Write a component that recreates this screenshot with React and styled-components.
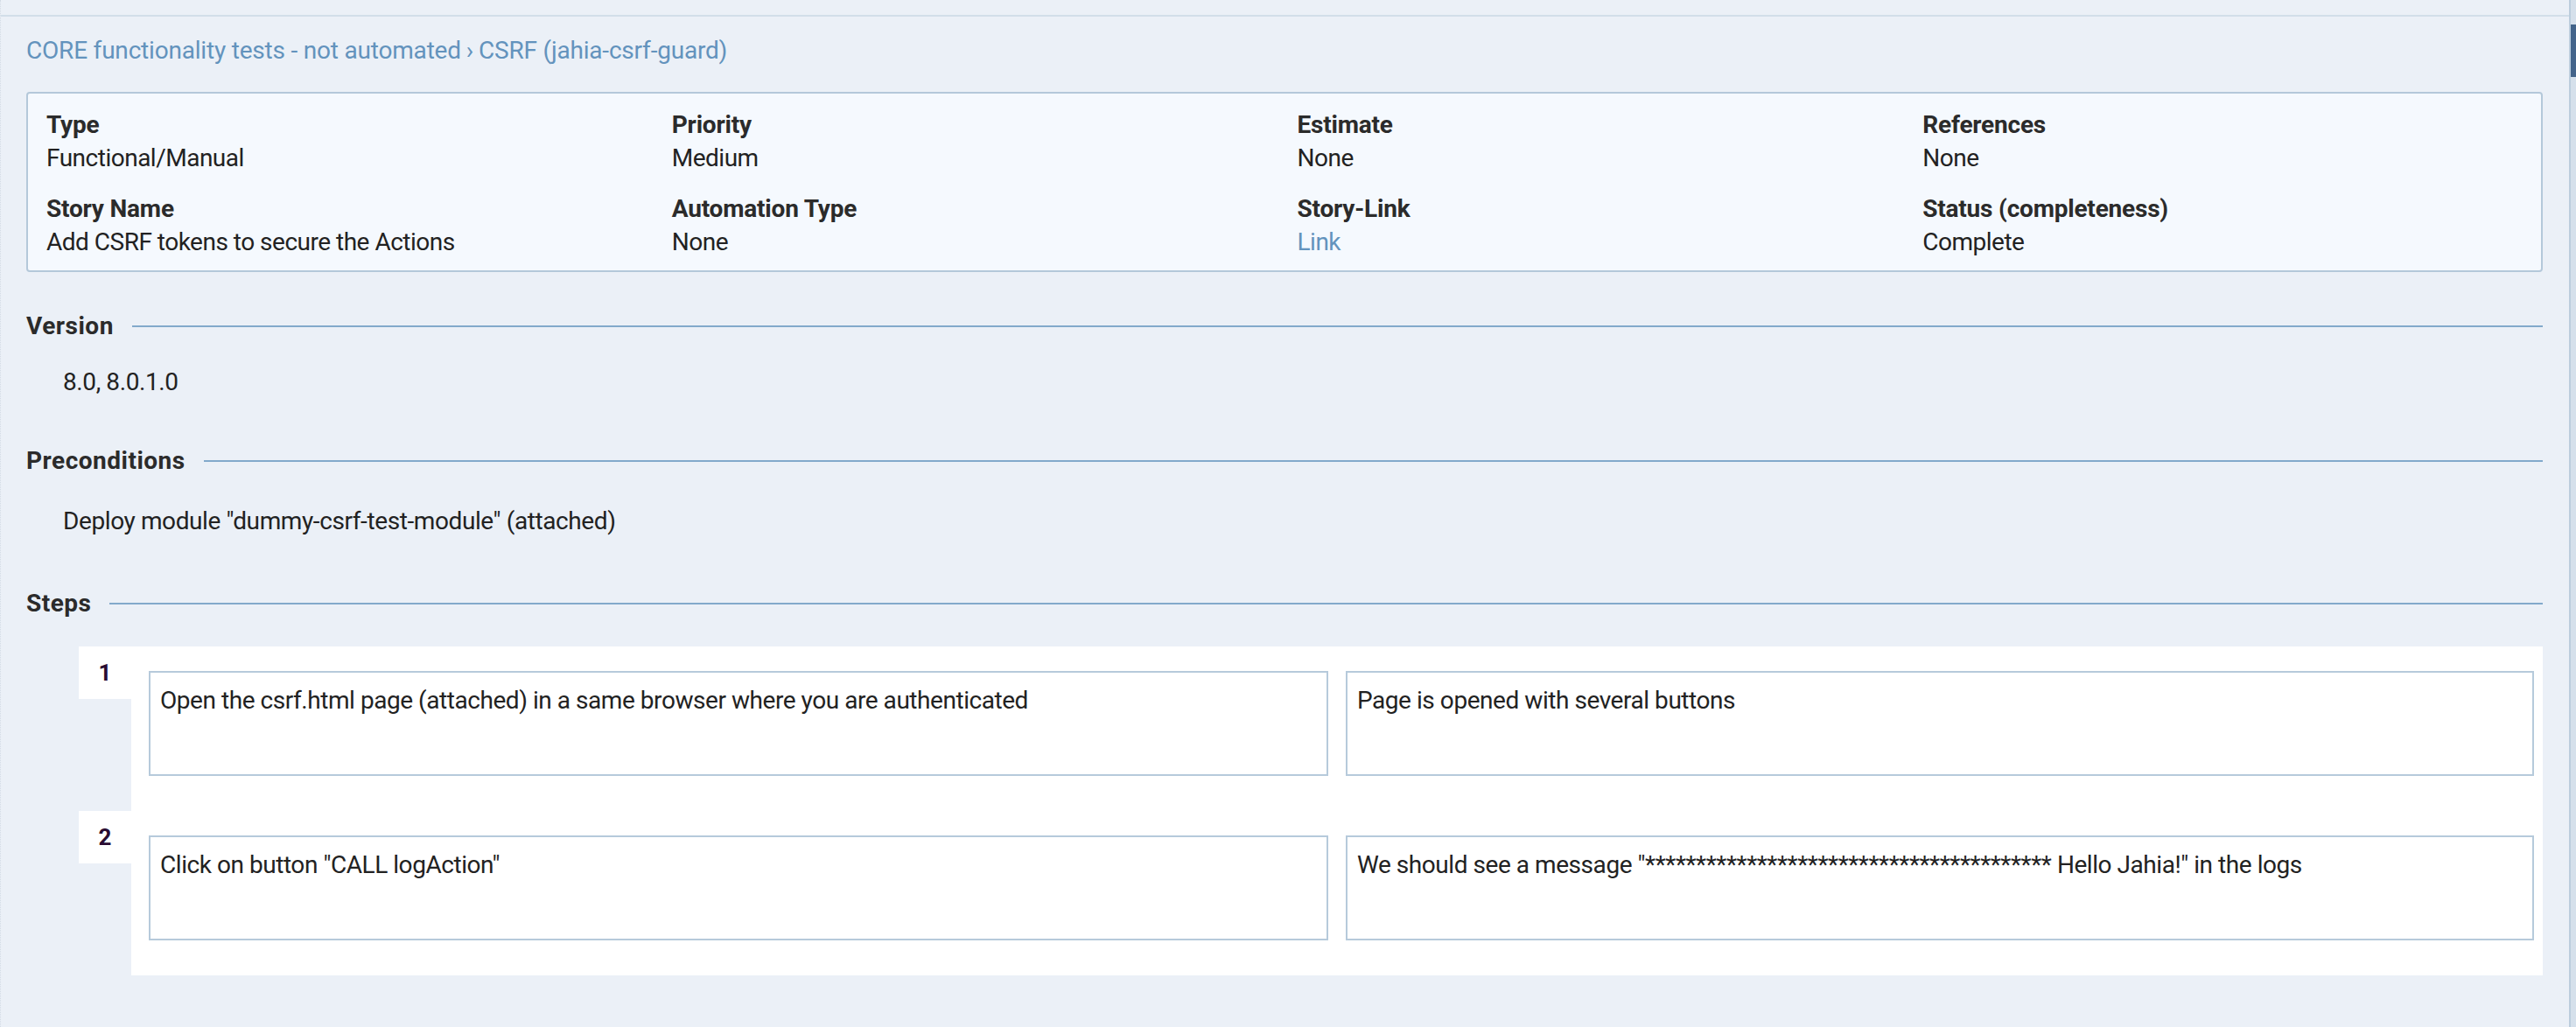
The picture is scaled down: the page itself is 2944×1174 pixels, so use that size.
import React from "react";
import styled, { createGlobalStyle } from "styled-components";

const GlobalStyle = createGlobalStyle`
  html, body {
    margin: 0;
    padding: 0;
    height: 100%;
    overflow: hidden;
    background: #ebf0f7;
  }
  body {
    font-family: Roboto, "Liberation Sans", Arial, sans-serif;
    color: #242424;
  }
  * { box-sizing: border-box; }
`;

const Screen = styled.div`
  display: flex;
  width: 2944px;
  height: 1174px;
  background: #ebf0f7;
`;

const Main = styled.div`
  flex: 1;
  display: flex;
  flex-direction: column;
  border-left: 1px dotted #d3dbe5;
  min-width: 0;
`;

const TopBar = styled.div`
  height: 19px;
  flex: none;
  border-bottom: 2px solid #d2dee9;
`;

const Content = styled.div`
  padding: 20px 30px 0 29px;
  display: flex;
  flex-direction: column;
`;

const Breadcrumb = styled.nav`
  font-size: 28px;
  line-height: 38px;
  color: #6393bd;
  letter-spacing: -0.2px;
`;

const Crumb = styled.a`
  color: inherit;
  text-decoration: none;
`;

const Sep = styled.span`
  margin: 0 6px;
`;

const InfoBox = styled.div`
  margin-top: 28px;
  background: #f5f9fe;
  border: 2px solid #b4c8da;
  border-radius: 4px;
  padding: 17px 20px 13px 21px;
  display: grid;
  grid-template-columns: repeat(4, 1fr);
  column-gap: 28px;
  row-gap: 20px;
`;

const Field = styled.div`
  display: flex;
  flex-direction: column;
  font-size: 28px;
  line-height: 38px;
`;

const Label = styled.div`
  font-weight: 700;
  color: #2b2b2b;
  letter-spacing: -0.2px;
`;

const Value = styled.div`
  color: #222;
  letter-spacing: -0.5px;
`;

const LinkValue = styled.a`
  color: #6393bd;
  text-decoration: none;
`;

const Section = styled.section`
  margin-top: ${(p) => p.$top}px;
  display: flex;
  flex-direction: column;
`;

const SectionHead = styled.div`
  display: flex;
  align-items: center;
  gap: 21px;
`;

const SectionTitle = styled.h3`
  margin: 0;
  font-size: 28px;
  line-height: 38px;
  font-weight: 700;
  color: #2b2b2b;
  letter-spacing: 0.5px;
`;

const Rule = styled.div`
  flex: 1;
  height: 2px;
  background: #82a9cb;
`;

const SectionBody = styled.div`
  margin-top: ${(p) => p.$top}px;
  padding-left: 42px;
  font-size: 28px;
  line-height: 38px;
  color: #222;
  letter-spacing: -0.4px;
`;

const Steps = styled.div`
  margin-top: 30px;
  padding-left: 60px;
  display: flex;
  flex-direction: column;
`;

const StepRow = styled.div`
  display: flex;
  align-items: stretch;
`;

const NumberTab = styled.div`
  flex: none;
  width: 60px;
  height: 60px;
  background: #fff;
  display: flex;
  align-items: center;
  justify-content: center;
  font-size: 26px;
  font-weight: 700;
  color: #2a0c31;
`;

const StepBody = styled.div`
  flex: 1;
  background: #fff;
  padding: 28px 10px 40px 20px;
  display: grid;
  grid-template-columns: 1348fr 1358fr;
  column-gap: 20px;
`;

const StepCell = styled.div`
  height: 120px;
  border: 2px solid #b6cadb;
  background: #fff;
  padding: 13px 11px 11px;
  font-size: 28px;
  line-height: 38px;
  color: #222;
  letter-spacing: -0.45px;
  min-width: 0;
`;

const ScrollTrack = styled.div`
  flex: none;
  width: 8px;
  background: #d5e0eb;
  border-left: 2px solid #bccddd;
  display: flex;
  flex-direction: column;
`;

const ScrollThumb = styled.div`
  margin-top: 28px;
  height: 60px;
  background: #43648a;
`;

const fields = [
  { label: "Type", value: "Functional/Manual" },
  { label: "Priority", value: "Medium" },
  { label: "Estimate", value: "None" },
  { label: "References", value: "None" },
  { label: "Story Name", value: "Add CSRF tokens to secure the Actions" },
  { label: "Automation Type", value: "None" },
  { label: "Story-Link", value: "Link", link: true },
  { label: "Status (completeness)", value: "Complete" },
];

const stars = "*".repeat(40);

const steps = [
  {
    n: 1,
    action: "Open the csrf.html page (attached) in a same browser where you are authenticated",
    expected: "Page is opened with several buttons",
  },
  {
    n: 2,
    action: 'Click on button "CALL logAction"',
    expected: `We should see a message "${stars} Hello Jahia!" in the logs`,
  },
];

export default function App() {
  return (
    <>
      <GlobalStyle />
      <Screen>
        <Main>
          <TopBar />
          <Content>
            <Breadcrumb>
              <Crumb href="#">CORE functionality tests - not automated</Crumb>
              <Sep>›</Sep>
              <Crumb href="#">CSRF (jahia-csrf-guard)</Crumb>
            </Breadcrumb>

            <InfoBox>
              {fields.map((f) => (
                <Field key={f.label}>
                  <Label>{f.label}</Label>
                  {f.link ? (
                    <Value>
                      <LinkValue href="#">{f.value}</LinkValue>
                    </Value>
                  ) : (
                    <Value>{f.value}</Value>
                  )}
                </Field>
              ))}
            </InfoBox>

            <Section $top={43}>
              <SectionHead>
                <SectionTitle>Version</SectionTitle>
                <Rule />
              </SectionHead>
              <SectionBody $top={26}>8.0, 8.0.1.0</SectionBody>
            </Section>

            <Section $top={52}>
              <SectionHead>
                <SectionTitle>Preconditions</SectionTitle>
                <Rule />
              </SectionHead>
              <SectionBody $top={31}>
                Deploy module "dummy-csrf-test-module" (attached)
              </SectionBody>
            </Section>

            <Section $top={56}>
              <SectionHead>
                <SectionTitle>Steps</SectionTitle>
                <Rule />
              </SectionHead>
              <Steps>
                {steps.map((s) => (
                  <StepRow key={s.n}>
                    <NumberTab>{s.n}</NumberTab>
                    <StepBody>
                      <StepCell>{s.action}</StepCell>
                      <StepCell>{s.expected}</StepCell>
                    </StepBody>
                  </StepRow>
                ))}
              </Steps>
            </Section>
          </Content>
        </Main>
        <ScrollTrack>
          <ScrollThumb />
        </ScrollTrack>
      </Screen>
    </>
  );
}
